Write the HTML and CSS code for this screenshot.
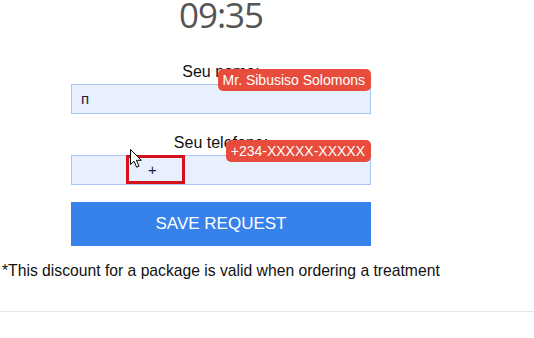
FILE: index.html
```html
<!DOCTYPE html>
<html>
<head>
<meta charset="utf-8">
<link rel="stylesheet" href="styles.css">
</head>
<body>
<div class="page">
  <div class="time">09:35</div>
  <div class="form">
    <div class="label">Seu nome:</div>
    <div class="field">
      <div class="input">п</div>
      <div class="tip">Mr. Sibusiso Solomons</div>
    </div>
    <div class="label label-second">Seu telefone:</div>
    <div class="field">
      <div class="input input-phone">+</div>
      <div class="highlight"></div>
      <svg class="cursor" width="13" height="20" viewBox="0 0 13 20">
        <path d="M0.5 0.5 L0.5 15.5 L4 12.2 L6.6 18.2 L9 17.2 L6.4 11.3 L11.3 11.3 Z" fill="#fff" stroke="#000" stroke-width="1" stroke-linejoin="round"/>
      </svg>
      <div class="tip">+234-XXXXX-XXXXX</div>
    </div>
    <div class="button">SAVE REQUEST</div>
  </div>
  <p class="note">*This discount for a package is valid when ordering a treatment</p>
</div>
<div class="rule"></div>
</body>
</html>
```
FILE: styles.css
```css
html, body {
  margin: 0;
  padding: 0;
  background: #fff;
}
body {
  font-family: "Liberation Sans", Arial, sans-serif;
  color: #111;
}
.page {
  width: 442px;
}
.time {
  text-align: center;
  font-family: "Open Sans", sans-serif;
  font-size: 35px;
  letter-spacing: -1px;
  line-height: 40px;
  height: 40px;
  margin-top: -5px;
  color: #555;
}
.form {
  width: 300px;
  margin: 0 auto;
  display: flex;
  flex-direction: column;
}
.label {
  margin-top: 28px;
  font-size: 16px;
  line-height: 18px;
  text-align: center;
  margin-bottom: 3px;
}
.label-second {
  margin-top: 20px;
}
.field {
  position: relative;
}
.input {
  box-sizing: border-box;
  height: 30px;
  border: 1px solid #a8c6f5;
  background: #e8f0fe;
  font-size: 15px;
  line-height: 28px;
  padding-left: 9px;
  color: #1a1a3a;
}
.input-phone {
  padding-left: 76px;
}
.tip {
  position: absolute;
  right: 0;
  top: -15px;
  height: 22px;
  line-height: 22px;
  padding: 0 6px 0 5px;
  background: #e74c3c;
  color: #fff;
  font-size: 14px;
  border-radius: 5px;
  white-space: nowrap;
}
.highlight {
  position: absolute;
  left: 55px;
  top: 0;
  width: 59px;
  height: 29px;
  box-sizing: border-box;
  border: 3px solid #d5111b;
}
.cursor {
  position: absolute;
  left: 59px;
  top: -6px;
}
.button {
  margin-top: 17px;
  height: 44px;
  background: #3781ea;
  color: #fff;
  font-size: 17px;
  line-height: 44px;
  text-align: center;
}
.note {
  margin: 16px 0 0;
  padding-left: 2px;
  font-size: 15.7px;
  line-height: 18px;
  white-space: nowrap;
}
.rule {
  margin-top: 31px;
  height: 1px;
  background: #e6e6ec;
}
```
